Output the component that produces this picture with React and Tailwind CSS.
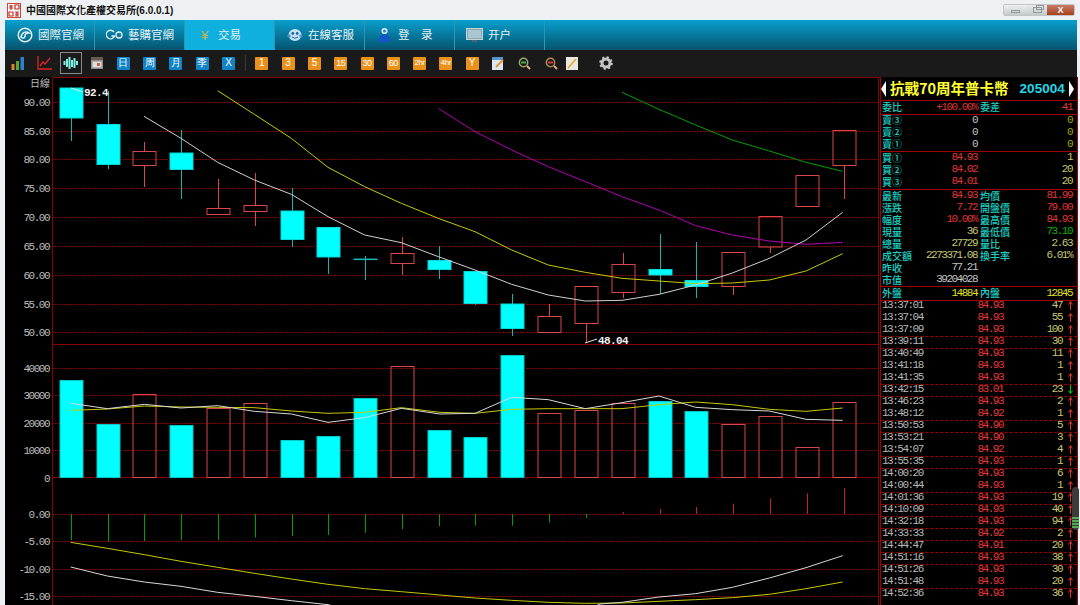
import React from "react";

const MONO = "font-['Liberation_Mono',monospace] text-[11px] leading-none tracking-[-1.5px]";
const CJK = "font-['Noto_Sans_CJK_TC','Noto_Sans_CJK_SC',sans-serif]";

// crop readings -> page coordinates
const top = (x, y) => [x / 3, 75 + y / 3];
const topR = (x, y) => [440 + x / 3, 75 + y / 3];
const low = (x, y) => [x / 3, 350 + y / 3];
const lowR = (x, y) => [440 + x / 3, 350 + y / 3];
const poly = (left, right) => left.map((p) => top(p[0], p[1])).concat(right.map((p) => topR(p[0], p[1]))).join(" ");
const polyLow = (left, right) => left.map((p) => low(p[0], p[1])).concat(right.map((p) => lowR(p[0], p[1]))).join(" ");

const candles = [
  { up: 0, y1: 88, y2: 118, hi: 88, lo: 141 },
  { up: 0, y1: 124.5, y2: 164.5, hi: 91, lo: 169 },
  { up: 1, y1: 151.5, y2: 165.5, hi: 142, lo: 187 },
  { up: 0, y1: 153, y2: 169.5, hi: 130, lo: 199 },
  { up: 1, y1: 208.5, y2: 214.5, hi: 179, lo: 214 },
  { up: 1, y1: 205.5, y2: 211.5, hi: 173, lo: 226 },
  { up: 0, y1: 211, y2: 239.5, hi: 188, lo: 247 },
  { up: 0, y1: 227.5, y2: 257, hi: 227, lo: 274 },
  { up: 0, y1: 259, y2: 259.6, hi: 256, lo: 280 },
  { up: 1, y1: 253.5, y2: 263.5, hi: 237, lo: 275 },
  { up: 0, y1: 260.5, y2: 269.5, hi: 246, lo: 279 },
  { up: 0, y1: 271.5, y2: 303.5, hi: 271, lo: 305 },
  { up: 0, y1: 304, y2: 328.5, hi: 294, lo: 336 },
  { up: 1, y1: 316.5, y2: 332.5, hi: 304, lo: 332 },
  { up: 1, y1: 286.5, y2: 323.5, hi: 286, lo: 343 },
  { up: 1, y1: 264.5, y2: 292.5, hi: 253, lo: 298 },
  { up: 0, y1: 269.5, y2: 275, hi: 234, lo: 294 },
  { up: 0, y1: 280.5, y2: 286.5, hi: 242, lo: 298 },
  { up: 1, y1: 252.5, y2: 286.5, hi: 252, lo: 295 },
  { up: 1, y1: 216.5, y2: 247, hi: 216, lo: 253 },
  { up: 1, y1: 175.5, y2: 206.5, hi: 175, lo: 206 },
  { up: 1, y1: 130.5, y2: 165.5, hi: 130, lo: 199 },
];
const volTops = [380, 423.5, 393.5, 424.5, 408, 402.5, 440, 435.5, 398, 366, 430, 437, 354.5, 412.5, 410, 402.5, 400.5, 410.5, 423.5, 415.5, 447, 401.5];
const macdEnds = [540, 541.7, 541, 540, 540, 537.7, 536, 535, 532.7, 529.3, 526, 525.7, 525.7, 522.7, 518, 512, 509, 507, 503.7, 498.3, 493.3, 488];

const priceGrid = [[102, "90.00"], [131, "85.00"], [159, "80.00"], [188, "75.00"], [217, "70.00"], [246, "65.00"], [275, "60.00"], [304, "55.00"], [332, "50.00"]];
const volGrid = [[368, "40000"], [395, "30000"], [423, "20000"], [450, "10000"]];
const macdGrid = [[514, "0.00"], [541, "-5.00"], [569, "-10.00"], [596, "-15.00"]];

const white = poly(
  [[432, 124], [543, 190], [653, 262], [763, 315], [874, 358], [984, 425], [1094, 480], [1204, 503], [1315, 545]],
  [[105, 585], [215, 628], [325, 660], [436, 678], [546, 676], [657, 658], [767, 630], [877, 594], [988, 550], [1098, 495], [1208, 412]]
);
const yellow = poly(
  [[653, 47], [763, 118], [874, 190], [984, 277], [1094, 335], [1204, 385], [1320, 432]],
  [[105, 470], [215, 525], [325, 570], [436, 592], [546, 610], [657, 618], [767, 626], [877, 624], [988, 615], [1098, 588], [1208, 536]]
);
const magenta = poly(
  [[1315, 100]],
  [[105, 170], [215, 225], [325, 275], [436, 320], [546, 365], [657, 405], [767, 452], [877, 480], [988, 498], [1098, 508], [1208, 502]]
);
const green = poly([], [[546, 52], [657, 103], [767, 150], [877, 195], [988, 228], [1098, 262], [1208, 289]]);
const volWhite = polyLow(
  [[212, 160], [322, 176], [433, 163], [543, 174], [653, 167], [763, 184], [874, 192], [984, 217], [1094, 203], [1204, 175], [1320, 192]],
  [[105, 190], [215, 142], [325, 149], [436, 176], [546, 158], [657, 138], [767, 172], [877, 179], [988, 183], [1098, 208], [1208, 211]]
);
const volYellow = polyLow(
  [[212, 181], [322, 177], [433, 168], [543, 171], [653, 172], [763, 173], [874, 183], [984, 190], [1094, 187], [1204, 173], [1320, 187]],
  [[105, 190], [215, 178], [325, 176], [436, 176], [546, 176], [657, 164], [767, 156], [877, 164], [988, 178], [1098, 184], [1208, 174]]
);
const macdYellow = polyLow(
  [[212, 577], [322, 595], [433, 614], [543, 634], [653, 652], [763, 670], [874, 687], [984, 703], [1094, 716], [1204, 725], [1320, 735]],
  [[105, 744], [215, 751], [325, 757], [436, 760], [546, 759], [657, 754], [767, 749], [877, 743], [988, 733], [1098, 716], [1208, 696]]
);
const macdWhite = polyLow(
  [[212, 651], [322, 678], [433, 696], [543, 709], [653, 727], [763, 739], [874, 752], [984, 764], [1060, 785]],
  [[430, 785], [480, 762], [546, 757], [657, 741], [767, 731], [877, 712], [988, 684], [1098, 653], [1208, 617]]
);

const CYAN = "#00ffff";
const RED = "#d8474a";
const cx = (i) => Math.round(70.7 + i * 36.8) + 0.5;

function Chart() {
  const gridLine = (y) => <line key={y} x1="52" x2="878" y1={y + 0.5} y2={y + 0.5} stroke="#8a0000" strokeDasharray="2 1" />;
  const label = ([y, t]) => (
    <text key={t} x="49" y={y + 4} textAnchor="end" fill="#bdbdbd" fontFamily="'Liberation Mono', monospace" fontSize="11" letterSpacing="-1.5">
      {t}
    </text>
  );
  return (
    <svg className="block flex-none w-[875px] h-[528px]" viewBox="5 77 875 528">
      <rect x="5" y="77" width="875" height="528" fill="#000" />
      <line x1="52" x2="880" y1="77.5" y2="77.5" stroke="#8a0000" />
      <line x1="52.5" x2="52.5" y1="77" y2="605" stroke="#8a0000" />
      <line x1="878.5" x2="878.5" y1="77" y2="605" stroke="#8a0000" />
      <line x1="52" x2="878" y1="344.5" y2="344.5" stroke="#8a0000" />
      <line x1="52" x2="878" y1="477.5" y2="477.5" stroke="#8a0000" />
      {priceGrid.map((g) => gridLine(g[0]))}
      {volGrid.map((g) => gridLine(g[0]))}
      {macdGrid.map((g) => gridLine(g[0]))}
      {priceGrid.map(label)}
      {volGrid.map(label)}
      {macdGrid.map(label)}
      {label([477.5, "0"])}
      <text x="50" y="87" textAnchor="end" fill="#bdbdbd" fontFamily="'Noto Sans CJK TC', sans-serif" fontSize="10">日線</text>

      {/* volume */}
      {volTops.map((t, i) => {
        const up = candles[i].up;
        return (
          <rect key={i} x={cx(i) - 11.5} y={Math.round(t) + 0.5} width="23" height={477 - Math.round(t)} fill={up ? "none" : CYAN} stroke={up ? RED : "#00c8c8"} />
        );
      })}
      <polyline points={volYellow} fill="none" stroke="#c8c800" />
      <polyline points={volWhite} fill="none" stroke="#d8d8d8" />

      {/* macd */}
      {macdEnds.map((e, i) => (
        <line key={i} x1={cx(i)} x2={cx(i)} y1="514" y2={e} stroke={i < 15 ? "#00a000" : "#c82020"} />
      ))}
      <polyline points={macdYellow} fill="none" stroke="#c8c800" />
      <polyline points={macdWhite} fill="none" stroke="#d8d8d8" />

      {/* candles: the wick stops at the body, hollow bodies stay empty */}
      {candles.map((c, i) => (
        <g key={i}>
          <line x1={cx(i)} x2={cx(i)} y1={c.hi} y2={c.y1} stroke={c.up ? RED : "#12b4b4"} />
          <line x1={cx(i)} x2={cx(i)} y1={c.y2} y2={c.lo} stroke={c.up ? RED : "#12b4b4"} />
          {c.up ? (
            <rect x={cx(i) - 11.5} y={c.y1} width="23" height={c.y2 - c.y1} fill="none" stroke={RED} />
          ) : (
            <rect x={cx(i) - 11.5} y={c.y1} width="23" height={c.y2 - c.y1} fill={CYAN} stroke={c.y2 - c.y1 < 1 ? "#12b4b4" : "#00d8d8"} />
          )}
        </g>
      ))}
      <polyline points={magenta} fill="none" stroke="#b000b0" />
      <polyline points={green} fill="none" stroke="#00a000" />
      <polyline points={yellow} fill="none" stroke="#c8c800" />
      <polyline points={white} fill="none" stroke="#d0d0d0" />

      <polyline points="71,88 83,92" stroke="#e8e8e8" fill="none" />
      <text x="84" y="96" fill="#f0f0f0" fontWeight="700" fontFamily="'Liberation Mono', monospace" fontSize="11" letterSpacing="-0.6">92.4</text>
      <polyline points="585,343 597,339" stroke="#e8e8e8" fill="none" />
      <text x="598" y="344" fill="#f0f0f0" fontWeight="700" fontFamily="'Liberation Mono', monospace" fontSize="11" letterSpacing="-0.6">48.04</text>
    </svg>
  );
}

const ticks = [
  ["13:37:01", "84.93", "47"], ["13:37:04", "84.93", "55"], ["13:37:09", "84.93", "100"], ["13:39:11", "84.93", "30"],
  ["13:40:49", "84.93", "11"], ["13:41:18", "84.93", "1"], ["13:41:35", "84.93", "1"], ["13:42:15", "83.01", "23"],
  ["13:46:23", "84.93", "2"], ["13:48:12", "84.92", "1"], ["13:50:53", "84.90", "5"], ["13:53:21", "84.90", "3"],
  ["13:54:07", "84.92", "4"], ["13:55:35", "84.93", "1"], ["14:00:20", "84.93", "6"], ["14:00:44", "84.93", "1"],
  ["14:01:36", "84.93", "19"], ["14:10:09", "84.93", "40"], ["14:32:18", "84.93", "94"], ["14:33:33", "84.92", "2"],
  ["14:44:47", "84.91", "20"], ["14:51:16", "84.93", "38"], ["14:51:26", "84.93", "30"], ["14:51:48", "84.93", "20"],
  ["14:52:36", "84.93", "36"],
];
const dashedRows = [2, 3, 6, 7, 9, 10, 12, 13, 15, 16, 17, 18, 19, 20, 21, 23];

const stats = [
  ["最新", "84.93", "text-[#e03434]", "均價", "81.99", "text-[#e03434]"],
  ["漲跌", "7.72", "text-[#e03434]", "開盤價", "79.00", "text-[#e03434]"],
  ["幅度", "10.00%", "text-[#e03434]", "最高價", "84.93", "text-[#e03434]"],
  ["現量", "36", "text-[#c8c870]", "最低價", "73.10", "text-[#10b010]"],
  ["總量", "27729", "text-[#c8c870]", "量比", "2.63", "text-[#c8c870]"],
  ["成交額", "2273371.08", "text-[#c8c870]", "換手率", "6.01%", "text-[#c8c870]"],
  ["昨收", "77.21", "text-[#c4c4c4]", "", "", ""],
  ["市值", "39204028", "text-[#c4c4c4]", "", "", ""],
];

function Arrow({ down }) {
  return (
    <svg width="5" height="9" viewBox="0 0 5 9" className="block">
      {down ? (
        <path d="M2.5 0V8M0.5 5.5L2.5 8.5L4.5 5.5" fill="none" stroke="#10c010" />
      ) : (
        <path d="M2.5 9V1M0.5 3.5L2.5 0.5L4.5 3.5" fill="none" stroke="#e03030" />
      )}
    </svg>
  );
}

function Label({ children }) {
  return <span className={`${CJK} text-[10px] font-medium leading-none text-[#1fd0c4]`}>{children}</span>;
}

function Row({ label, value, valueCls, label2, value2, value2Cls, h = "h-[12px]" }) {
  return (
    <div className={`flex flex-none items-center pl-[1px] pr-[5px] ${h}`}>
      <div className="flex w-[95px] items-center justify-between">
        <Label>{label}</Label>
        <span className={`${MONO} ${valueCls}`}>{value}</span>
      </div>
      <div className="ml-[3px] flex flex-1 items-center justify-between">
        <Label>{label2}</Label>
        <span className={`${MONO} ${value2Cls}`}>{value2}</span>
      </div>
    </div>
  );
}

function QuotePanel() {
  return (
    <div className="relative flex h-[528px] w-[198px] flex-none flex-col border-x border-[#a00000] bg-black">
      <div className="flex h-[24px] flex-none items-center border-b border-[#a00000] whitespace-nowrap">
        <div className="h-0 w-0 border-y-[8px] border-r-[5px] border-y-transparent border-r-white" />
        <span className={`${CJK} ml-[4px] text-[14.5px] font-bold leading-none text-[#ffff33]`}>抗戰70周年普卡幣</span>
        <span className="ml-[11px] font-['Liberation_Sans',sans-serif] text-[13.5px] font-bold leading-none text-[#22d8e8]">205004</span>
        <div className="ml-[4px] h-0 w-0 border-y-[8px] border-l-[5px] border-y-transparent border-l-white" />
      </div>
      <div className="flex h-[14px] flex-none flex-col border-b border-[#a00000]">
        <Row h="h-[12px]" label="委比" value="+100.00%" valueCls="text-[#e03434]" label2="委差" value2="41" value2Cls="text-[#e03434]" />
      </div>
      <div className="flex h-[37px] flex-none flex-col justify-center border-b border-[#a00000] pb-[2px]">
        <Row label="賣③" value="0" valueCls="text-[#c4c4c4]" label2="" value2="0" value2Cls="text-[#a8a800]" />
        <Row label="賣②" value="0" valueCls="text-[#c4c4c4]" label2="" value2="0" value2Cls="text-[#a8a800]" />
        <Row label="賣①" value="0" valueCls="text-[#c4c4c4]" label2="" value2="0" value2Cls="text-[#a8a800]" />
      </div>
      <div className="flex h-[38px] flex-none flex-col justify-center border-b border-[#a00000] pb-[2px]">
        <Row label="買①" value="84.93" valueCls="text-[#e03434]" label2="" value2="1" value2Cls="text-[#c8c870]" />
        <Row label="買②" value="84.02" valueCls="text-[#e03434]" label2="" value2="20" value2Cls="text-[#c8c870]" />
        <Row label="買③" value="84.01" valueCls="text-[#e03434]" label2="" value2="20" value2Cls="text-[#c8c870]" />
      </div>
      <div className="flex h-[97px] flex-none flex-col justify-center border-b border-[#a00000] pb-[1px]">
        {stats.map((s) => (
          <Row key={s[0]} label={s[0]} value={s[1]} valueCls={s[2]} label2={s[3]} value2={s[4]} value2Cls={s[5]} />
        ))}
      </div>
      <div className="flex h-[14px] flex-none flex-col border-b border-[#a00000]">
        <Row label="外盤" value="14884" valueCls="text-[#e0e020]" label2="內盤" value2="12845" value2Cls="text-[#e0e020]" />
      </div>
      <div className="flex flex-col">
        {ticks.map((t, i) => (
          <div
            key={t[0]}
            className={`flex h-[12px] flex-none items-center border-b border-dashed pb-[3px] pl-[1px] ${MONO} ${dashedRows.includes(i) ? "border-[#a00000]" : "border-transparent"}`}
          >
            <span className="w-[60px] text-[#b8b8b8]">{t[0]}</span>
            <span className="w-[61px] text-right text-[#e83838]">{t[1]}</span>
            <span className="w-[59px] text-right text-[#c8c870]">{t[2]}</span>
            <span className="ml-[6px]">
              <Arrow down={t[1] === "83.01"} />
            </span>
          </div>
        ))}
      </div>
      {/* scroll handle over the list */}
      <div className="absolute right-[-2px] top-[410px] flex h-[43px] w-[7px] flex-col justify-end gap-[1px] rounded-sm bg-[#3c3c3c] pb-[2px]">
        <div className="h-[2px] bg-[#4caf50]" />
        <div className="h-[2px] bg-[#4caf50]" />
        <div className="h-[2px] bg-[#4caf50]" />
        <div className="h-[2px] bg-[#4caf50]" />
      </div>
    </div>
  );
}

function SealIcon() {
  return (
    <svg width="14" height="15" viewBox="0 0 14 15" className="flex-none">
      <rect x="0.5" y="0.5" width="13" height="14" fill="#fff" stroke="#c9483e" />
      <path d="M2 3H6M2 5H6M4 2V7M8 2H12V6H8ZM2 9H6V13H2ZM8 9H12M8 11H12M10 9V13M8 13H12" stroke="#c22a22" fill="none" strokeWidth="1.2" />
    </svg>
  );
}

function TabIcon({ name }) {
  if (name === "globe")
    return (
      <svg width="16" height="16" viewBox="0 0 16 16" fill="none" stroke="#e4f1f5" strokeWidth="1.5">
        <circle cx="8" cy="8" r="6.8" />
        <path d="M4 10C5 5 9 4 12 6C10 6 8 7 8 9C8 11 6 12 4 10Z" />
      </svg>
    );
  if (name === "go")
    return (
      <svg width="17" height="12" viewBox="0 0 17 12" fill="none" stroke="#e4f1f5" strokeWidth="1.3">
        <path d="M8 3A4.3 4.3 0 1 0 8.6 7H5.5" />
        <circle cx="13" cy="6" r="3" />
      </svg>
    );
  if (name === "yen") return <span className="font-['Liberation_Sans',sans-serif] text-[13px] leading-none text-[#c8b24a]">¥</span>;
  if (name === "face")
    return (
      <svg width="16" height="14" viewBox="0 0 16 14">
        <ellipse cx="8" cy="7" rx="6.5" ry="6" fill="#c4e2f4" />
        <ellipse cx="2" cy="8" rx="1.8" ry="1.5" fill="#4d8ecb" />
        <ellipse cx="14" cy="8" rx="1.8" ry="1.5" fill="#4d8ecb" />
        <circle cx="5.8" cy="5.5" r="1.4" fill="#1d62ad" />
        <circle cx="10.2" cy="5.5" r="1.4" fill="#1d62ad" />
        <path d="M5 9Q8 11.5 11 9" stroke="#1d62ad" fill="none" />
      </svg>
    );
  if (name === "user")
    return (
      <svg width="13" height="16" viewBox="0 0 13 16">
        <circle cx="6.5" cy="4" r="3" fill="#e8f2fa" />
        <circle cx="6.5" cy="4" r="1.6" fill="#2f7ddd" />
        <path d="M0.5 14C0.5 9 3 7.5 6.5 7.5S12.5 9 12.5 14C10 16 3 16 0.5 14Z" fill="#1258c4" />
      </svg>
    );
  return (
    <svg width="17" height="15" viewBox="0 0 17 15">
      <rect x="0.5" y="0.5" width="16" height="11" fill="#8fa5ad" stroke="#c6d4d8" />
      <rect x="2" y="2" width="13" height="8" fill="#a9c6d1" />
      <rect x="6" y="12" width="5" height="2" fill="#52666e" />
    </svg>
  );
}

const tabs = [
  ["globe", "國際官網"],
  ["go", "藝購官網"],
  ["yen", "交易"],
  ["face", "在線客服"],
  ["user", "登　录"],
  ["monitor", "开户"],
];

function ToolIcon({ name }) {
  if (name === "bars")
    return (
      <svg width="14" height="14" viewBox="0 0 14 14">
        <rect x="0.5" y="8" width="3" height="6" fill="#d48c1c" />
        <rect x="5" y="5" width="3" height="9" fill="#52a83a" />
        <rect x="9.5" y="1" width="3.5" height="13" fill="#2e7fd0" />
      </svg>
    );
  if (name === "line")
    return (
      <svg width="15" height="14" viewBox="0 0 15 14" fill="none" stroke="#e02424" strokeWidth="1.3">
        <path d="M1 0V13H15" />
        <path d="M3 10L6 6L8 8L13 2" />
      </svg>
    );
  if (name === "candle")
    return (
      <div className="flex h-[22px] w-[22px] items-center justify-center border border-[#8a8a8a]">
        <svg width="15" height="14" viewBox="0 0 15 14" stroke="#7ff0e4" strokeWidth="2">
          <path d="M1.5 5V9M4 3V11M6.5 1V13M9 4V11M11.5 2V12M14 5V9" />
        </svg>
      </div>
    );
  if (name === "cal")
    return (
      <svg width="12" height="12" viewBox="0 0 12 12">
        <rect width="12" height="12" fill="#8d8d8d" />
        <rect y="0" width="12" height="3" fill="#6c5a52" />
        <rect x="1.5" y="4.5" width="9" height="6" fill="#ddd" />
        <rect x="6" y="6" width="3" height="3" fill="#c9643a" />
      </svg>
    );
  if (name === "note")
    return (
      <svg width="13" height="13" viewBox="0 0 13 13">
        <rect width="11" height="13" fill="#dbe8f4" />
        <rect width="11" height="3" fill="#5b92c8" />
        <path d="M4 10L11 3" stroke="#e0962c" strokeWidth="2" />
      </svg>
    );
  if (name === "zoomIn" || name === "zoomOut")
    return (
      <svg width="13" height="13" viewBox="0 0 13 13" fill="none">
        <circle cx="5.5" cy="5.5" r="4.2" stroke={name === "zoomIn" ? "#9aa86a" : "#b08c52"} strokeWidth="1.4" />
        <path d="M3 5.5H8" stroke={name === "zoomIn" ? "#3fb04a" : "#e03545"} strokeWidth="2" />
        <path d="M9 9L12 12" stroke="#e3b078" strokeWidth="2" />
      </svg>
    );
  if (name === "pencil")
    return (
      <svg width="12" height="13" viewBox="0 0 12 13">
        <rect width="12" height="13" fill="#e8e8e0" />
        <path d="M2 11L10 2" stroke="#eea52e" strokeWidth="1.6" />
      </svg>
    );
  return null;
}

function Square({ text, orange }) {
  return (
    <div
      className={`flex h-[13px] w-[13px] items-center justify-center overflow-hidden rounded-[1px] font-['Liberation_Sans',sans-serif] leading-none text-white ${
        text.length > 2 ? "text-[8px] tracking-[-0.5px]" : text.length > 1 ? "text-[9px] tracking-[-0.5px]" : "text-[10px]"
      } ${orange ? "bg-[#e8921c]" : "bg-[#1184c8]"}`}
    >
      {text}
    </div>
  );
}

const toolbar = [
  { icon: "bars" }, { icon: "line" }, { icon: "candle" }, { icon: "cal" },
  { blue: "日" }, { blue: "周" }, { blue: "月" }, { blue: "季" }, { blue: "X" },
  { sep: true },
  { orange: "1" }, { orange: "3" }, { orange: "5" }, { orange: "15" }, { orange: "30" }, { orange: "60" }, { orange: "2hr" }, { orange: "4hr" }, { orange: "Y" },
  { icon: "note" }, { icon: "zoomIn" }, { icon: "zoomOut" },
];

export default function App() {
  return (
    <div className="h-[605px] w-[1080px] overflow-hidden bg-[#eef1f3]">
      <div className="flex h-[20px] items-center pl-[7px]">
        <SealIcon />
        <span className={`${CJK} ml-[5px] whitespace-nowrap text-[10px] font-bold leading-none text-[#111]`}>
          中國國際文化產權交易所<span className="font-['Liberation_Sans',sans-serif]">(6.0.0.1)</span>
        </span>
        <div className="ml-auto mr-[5px] flex h-[12px] w-[72px] overflow-hidden rounded-[2px] border border-[#bfc5c8]">
          <div className="flex w-[23px] items-end justify-center bg-gradient-to-b from-[#eef1f2] to-[#c4cacc] pb-[2px]">
            <div className="h-[3px] w-[9px] border border-[#8f979b]" />
          </div>
          <div className="flex w-[20px] items-center justify-center bg-gradient-to-b from-[#e6eaec] to-[#c4cacc]">
            <div className="relative h-[6px] w-[9px] border border-[#8f979b]">
              <div className="absolute right-[-3px] top-[-3px] h-[5px] w-[8px] border border-[#8f979b]" />
            </div>
          </div>
          <div className="flex flex-1 items-center justify-center bg-gradient-to-b from-[#c77b66] to-[#a6401c] font-['Liberation_Sans',sans-serif] text-[9px] font-bold leading-none text-white">
            X
          </div>
        </div>
      </div>

      <div className="ml-[5px] w-[1072px]">
        <div className="flex h-[30px] bg-gradient-to-b from-[#08a0ce] to-[#05546f]">
          {tabs.map(([icon, label]) => (
            <div
              key={label}
              className={`flex w-[90px] items-center gap-[5px] border-r border-[#2f95b5] pl-[11px] ${icon === "yen" ? "bg-[#10b0de]" : ""}`}
            >
              <span className="flex w-[17px] flex-none justify-center">
                <TabIcon name={icon} />
              </span>
              <span className={`${CJK} whitespace-nowrap text-[11.5px] leading-none text-[#e4f1f5]`}>{label}</span>
            </div>
          ))}
        </div>

        <div className="flex h-[27px] items-center bg-[#1a1a1a] pb-[1px]">
          {toolbar.map((t, i) =>
            t.sep ? (
              <div key={i} className="mx-[3px] h-[16px] w-px bg-[#3a3a3a]" />
            ) : (
              <div key={i} className="flex w-[26.3px] flex-none items-center justify-center">
                {t.icon && <ToolIcon name={t.icon} />}
                {t.blue && <Square text={t.blue} />}
                {t.orange && <Square text={t.orange} orange />}
              </div>
            )
          )}
          <div className="flex w-[16px] flex-none justify-center">
            <ToolIcon name="pencil" />
          </div>
          <svg width="14" height="14" viewBox="0 0 14 14" className="ml-[19px]">
            <circle cx="7" cy="7" r="4" fill="none" stroke="#c4c4c4" strokeWidth="3" />
            <circle cx="7" cy="7" r="5.8" fill="none" stroke="#c4c4c4" strokeWidth="2" strokeDasharray="2.2 2.35" />
          </svg>
        </div>

        <div className="flex">
          <Chart />
          <QuotePanel />
        </div>
      </div>
    </div>
  );
}
